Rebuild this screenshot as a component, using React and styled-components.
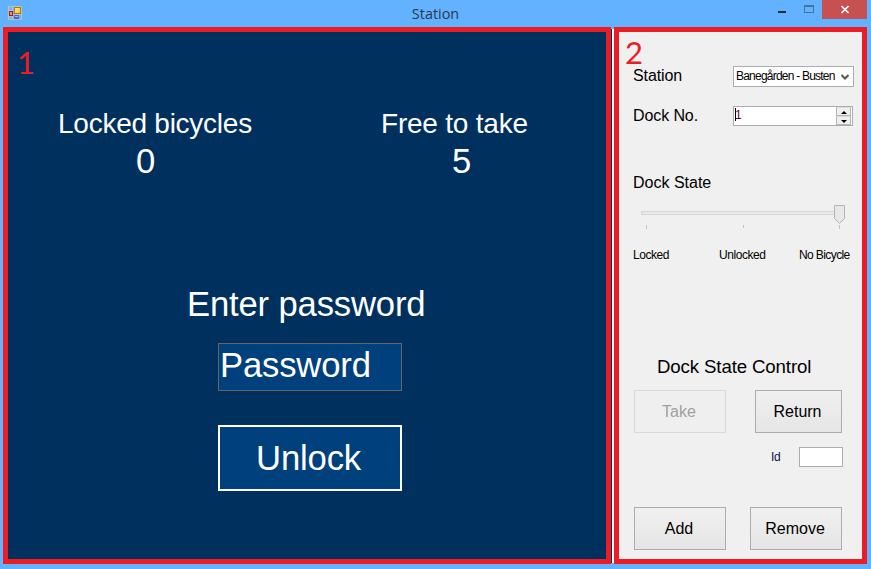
import React from "react";
import styled, { createGlobalStyle } from "styled-components";

const GlobalStyle = createGlobalStyle`
  * { box-sizing: border-box; }
  body { margin: 0; overflow: hidden; }
  button, input { font: inherit; letter-spacing: inherit; margin: 0; }
`;

const Window = styled.div`
  width: 871px;
  height: 569px;
  display: flex;
  flex-direction: column;
  background: #63b2ff;
  font-family: "Liberation Sans", Arial, sans-serif;
  font-size: 16px;
  color: #000;
  white-space: nowrap;
`;

const TitleBar = styled.header`
  height: 27px;
  display: grid;
  grid-template-columns: 93px 1fr 93px;
  align-items: start;
  padding-right: 4px;
`;

const AppIcon = styled.svg`
  margin: 6px 0 0 8px;
  display: block;
`;

const Title = styled.h1`
  margin: 0;
  padding-left: 4px;
  font: 400 14.4px/27px "Open Sans", sans-serif;
  text-align: center;
  color: #27384a;
`;

const WindowControls = styled.div`
  display: flex;
  justify-content: flex-end;
  height: 19px;
`;

const ControlButton = styled.button`
  width: ${(p) => p.$width}px;
  height: 19px;
  padding: 0;
  border: 0;
  background: ${(p) => p.$bg || "transparent"};
  svg { display: block; }
`;

const Client = styled.main`
  height: 537px;
  display: flex;
  padding-left: 3px;
`;

const Divider = styled.div`
  width: 3px;
  height: 534px;
  margin-top: 2px;
  background: #fff;
  border-left: 1px solid #00305e;
`;

const Panel = styled.section`
  position: relative;
  width: ${(p) => p.$width}px;
  height: 537px;
  border: 5px solid #ed1c24;
`;

const Kiosk = styled(Panel)`
  background: #00305e;
  color: #fff;
  font-size: 34.67px;
  letter-spacing: -0.17px;
`;

const Simulator = styled(Panel)`
  background: #f0f0f0;
  padding: 34px 0 0 14px;
`;

const Callout = styled.span`
  position: absolute;
  left: ${(p) => p.$left}px;
  top: ${(p) => p.$top}px;
  font: 400 31px/36px Lato, sans-serif;
  color: #ed1c24;
`;

const Stats = styled.div`
  display: grid;
  grid-template-columns: 323px 1fr;
  padding: 76px 0 0 50px;
`;

const StatLabel = styled.div`
  font-size: 28px;
  line-height: 32px;
  letter-spacing: ${(p) => p.$tracking}px;
  margin-bottom: 1px;
`;

const StatValue = styled.div`
  line-height: 40px;
  padding-left: ${(p) => p.$indent}px;
`;

const Prompt = styled.div`
  margin: 103px 0 19px 179px;
  line-height: 40px;
`;

const PasswordField = styled.div`
  width: 184px;
  height: 48px;
  margin-left: 210px;
  border: 1px solid #646464;
  background: #00407d;
  line-height: 42px;
  padding-left: 1px;
`;

const UnlockButton = styled.button`
  display: block;
  width: 184px;
  height: 66px;
  margin: 34px 0 0 210px;
  padding: 0 3px 0 0;
  border: 2px solid #fff;
  background: #00407d;
  color: inherit;
  line-height: 62px;
`;

const Field = styled.div`
  display: flex;
  height: 21px;
  margin-bottom: 19px;
`;

const FieldLabel = styled.label`
  width: 100px;
  line-height: 19px;
  letter-spacing: -0.1px;
`;

const Small = styled.span`
  font-size: 12px;
  letter-spacing: ${(p) => p.$tracking ?? -0.45}px;
`;

const ComboBox = styled.div`
  display: flex;
  width: 121px;
  height: 21px;
  border: 1px solid #abadb3;
  background: #fff;
  padding-left: 2px;
  line-height: 19px;
  svg { display: block; margin-left: auto; }
`;

const ComboText = styled(Small)`
  width: 100px;
  overflow: hidden;
`;

const Spinner = styled.div`
  display: flex;
  width: 120px;
  height: 20px;
  border: 1px solid #abadb3;
  background: #fff;
  font-size: 12px;
  line-height: 17px;
`;

const Caret = styled.span`
  width: 1px;
  height: 13px;
  margin: 1px 0 0 1px;
  background: #000;
`;

const SpinValue = styled.span`
  color: #4b0048;
  margin-left: -1px;
`;

const SpinButtons = styled.div`
  width: 15px;
  height: 18px;
  margin: 0 1px 0 auto;
  display: flex;
  flex-direction: column;
  background: #f0f0f0;
`;

const SpinButton = styled.div`
  height: 9px;
  border: 1px solid #b4b4b4;
  border-top-color: #dcdcdc;
  background: #f0f0f0;
  svg { display: block; margin: 2px auto 0; }
`;

const SectionLabel = styled.div`
  margin-top: 46px;
  line-height: 20px;
`;

const TrackBar = styled.svg`
  display: block;
  margin: 11px 0 0 7px;
`;

const TrackLabels = styled.div`
  display: grid;
  grid-template-columns: 86px 80px 1fr;
  line-height: 14px;
  margin-top: 18px;
  height: 14px;
`;

const Heading = styled.h2`
  margin: 94px 0 12px 24px;
  font-size: 18.67px;
  font-weight: 400;
  line-height: 22px;
  letter-spacing: -0.13px;
`;

const ButtonRow = styled.div`
  display: flex;
  justify-content: space-between;
  width: 208px;
  margin-left: 1px;
`;

const ActionButton = styled.button`
  width: ${(p) => p.$width || 92}px;
  height: 43px;
  padding: 0 2px 0 0;
  border: 1px solid #acacac;
  background: linear-gradient(#f0f0f0, #e5e5e5);
  color: #000;
  &:disabled {
    border-color: #d9d9d9;
    background: #efefef;
    color: #a0a0a0;
  }
`;

const IdRow = styled.div`
  display: flex;
  height: 20px;
  margin: 14px 0 40px 138px;
  line-height: 20px;
  color: #10104a;
`;

const IdLabel = styled(Small)`
  width: 28px;
`;

const IdInput = styled.input`
  width: 44px;
  height: 20px;
  padding: 0;
  border: 1px solid #abadb3;
  background: #fff;
`;

function FormIcon() {
  return (
    <AppIcon width="14" height="14" viewBox="0 0 14 14" shapeRendering="crispEdges">
      <defs>
        <linearGradient id="gold" x1="0" y1="0" x2="1" y2="1">
          <stop offset="0" stopColor="#fff0a8" />
          <stop offset="1" stopColor="#f3bd16" />
        </linearGradient>
      </defs>
      <path d="M.5 .5H13.5V13.5H.5zM.5 4.5H5M4.5 .5V13.5M.5 10.5H5M5 8.5H13.5" fill="#72b6f4" stroke="#bdbdb9" />
      <rect x="6.5" y="1.5" width="6" height="6" fill="url(#gold)" stroke="#ae7912" />
      <rect x="1.5" y="5.5" width="3" height="4" fill="#ef8b7b" stroke="#9d2118" />
      <rect x="6" y="9" width="5" height="4" fill="#3d70cc" />
      <rect x="7" y="10" width="3" height="1" fill="#a1c1f4" />
    </AppIcon>
  );
}

function Stat({ label, value, indent, tracking }) {
  return (
    <div>
      <StatLabel $tracking={tracking}>{label}</StatLabel>
      <StatValue $indent={indent}>{value}</StatValue>
    </div>
  );
}

export default function App() {
  return (
    <Window>
      <GlobalStyle />
      <TitleBar>
        <FormIcon />
        <Title>Station</Title>
        <WindowControls>
          <ControlButton $width={26} aria-label="Minimize">
            <svg width="26" height="19" shapeRendering="crispEdges"><rect x="8" y="11" width="8" height="2" fill="#1d2935" /></svg>
          </ControlButton>
          <ControlButton $width={26} aria-label="Maximize">
            <svg width="26" height="19" shapeRendering="crispEdges"><path d="M8.5 5.5H17.5V12.5H8.5zM8 6.5H18" fill="none" stroke="#487299" /></svg>
          </ControlButton>
          <ControlButton $width={45} $bg="#c75050" aria-label="Close">
            <svg width="45" height="19"><path d="M19.5 6L26.5 13M26.5 6L19.5 13" stroke="#fff" strokeWidth="1.7" /></svg>
          </ControlButton>
        </WindowControls>
      </TitleBar>
      <Client>
        <Kiosk $width={608}>
          <Callout $left={9} $top={12}>1</Callout>
          <Stats>
            <Stat label="Locked bicycles" value="0" indent={78} tracking={-0.25} />
            <Stat label="Free to take" value="5" indent={71} tracking={-0.22} />
          </Stats>
          <Prompt>Enter password</Prompt>
          <PasswordField>Password</PasswordField>
          <UnlockButton>Unlock</UnlockButton>
        </Kiosk>
        <Divider />
        <Simulator $width={253}>
          <Callout $left={6} $top={2}>2</Callout>
          <Field>
            <FieldLabel>Station</FieldLabel>
            <ComboBox>
              <ComboText $tracking={-0.78}>Banegården - Busten</ComboText>
              <svg width="14" height="19"><path d="M2.5 8L6 11.5L9.5 8" fill="none" stroke="#555" strokeWidth="2" /></svg>
            </ComboBox>
          </Field>
          <Field>
            <FieldLabel>Dock No.</FieldLabel>
            <Spinner>
              <Caret />
              <SpinValue>1</SpinValue>
              <SpinButtons>
                <SpinButton><svg width="6" height="4"><path d="M0 4L3 1L6 4z" /></svg></SpinButton>
                <SpinButton><svg width="6" height="4"><path d="M0 1L3 4L6 1z" /></svg></SpinButton>
              </SpinButtons>
            </Spinner>
          </Field>
          <SectionLabel>Dock State</SectionLabel>
          <TrackBar width="205" height="26" viewBox="0 0 205 26">
            <rect x="1.5" y="7.5" width="202" height="3" fill="#e7eaea" stroke="#d6d6d6" />
            <path d="M6.5 21V25M103.5 21V24M199.5 21V25" stroke="#c4c4c4" />
            <path d="M194.5 1.5H204.5V14.5L199.5 19.5L194.5 14.5z" fill="#e8e8e8" stroke="#b4b4b4" />
          </TrackBar>
          <TrackLabels>
            <Small>Locked</Small>
            <Small>Unlocked</Small>
            <Small $tracking={-0.6}>No Bicycle</Small>
          </TrackLabels>
          <Heading>Dock State Control</Heading>
          <ButtonRow>
            <ActionButton disabled>Take</ActionButton>
            <ActionButton $width={87}>Return</ActionButton>
          </ButtonRow>
          <IdRow>
            <IdLabel>Id</IdLabel>
            <IdInput aria-label="Id" />
          </IdRow>
          <ButtonRow>
            <ActionButton>Add</ActionButton>
            <ActionButton>Remove</ActionButton>
          </ButtonRow>
        </Simulator>
      </Client>
    </Window>
  );
}
